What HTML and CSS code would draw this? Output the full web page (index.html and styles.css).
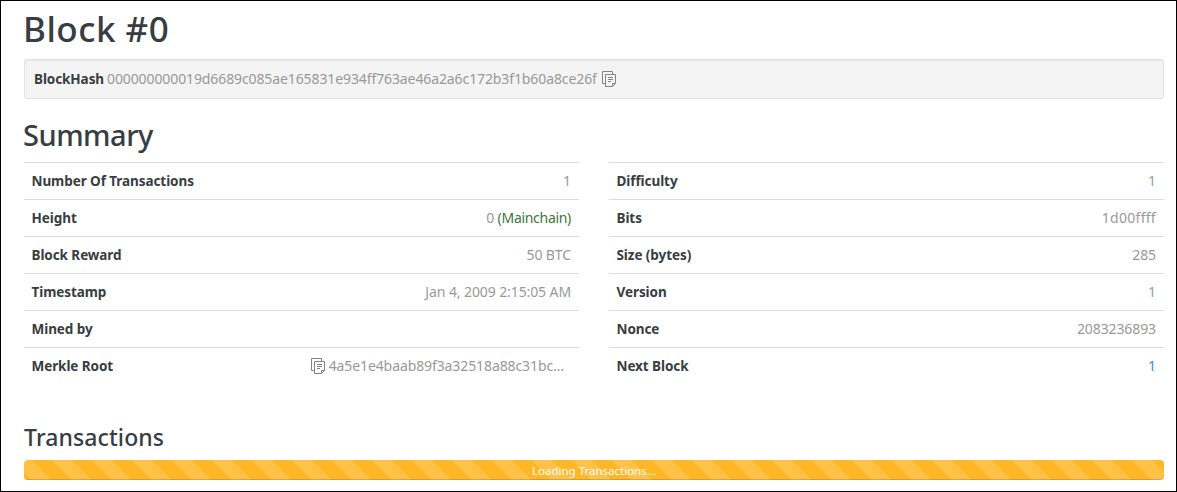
FILE: index.html
```html
<!DOCTYPE html>
<html lang="en">
<head>
<meta charset="utf-8">
<title>Block #0</title>
<link rel="stylesheet" href="styles.css">
</head>
<body>
<svg class="defs" width="0" height="0">
  <symbol id="copy" viewBox="0 0 14 16">
    <path d="M3 12.5H.5V.5h10V3" fill="none" stroke="#848484"/>
    <path d="M3.500 3.500h10v9l-3 3h-7z" fill="none" stroke="#848484"/>
    <path d="M10.500 15v-2.500h2.500M6 6.500h5M6 8.500h5M6 10.500h3" fill="none" stroke="#848484"/>
  </symbol>
</svg>
<main class="page">
  <h1 class="title"><span>Block #0</span></h1>
  <div class="well"><strong class="hash-label">BlockHash</strong><span class="hash">000000000019d6689c085ae165831e934ff763ae46a2a6c172b3f1b60a8ce26f</span><svg class="copy"><use href="#copy"/></svg></div>
  <h2 class="subtitle"><span>Summary</span></h2>
  <div class="columns">
    <dl class="table">
      <div class="row"><dt>Number Of Transactions</dt><dd>1</dd></div>
      <div class="row"><dt>Height</dt><dd>0 <span class="main">(Mainchain)</span></dd></div>
      <div class="row"><dt>Block Reward</dt><dd>50 BTC</dd></div>
      <div class="row"><dt>Timestamp</dt><dd class="date">Jan 4, 2009 2:15:05 AM</dd></div>
      <div class="row"><dt>Mined by</dt><dd></dd></div>
      <div class="row"><dt>Merkle Root</dt><dd class="merkle"><svg class="copy"><use href="#copy"/></svg><span>4a5e1e4baab89f3a32518a88c31bc…</span></dd></div>
    </dl>
    <dl class="table">
      <div class="row"><dt>Difficulty</dt><dd>1</dd></div>
      <div class="row"><dt>Bits</dt><dd class="bits">1d00ffff</dd></div>
      <div class="row"><dt>Size (bytes)</dt><dd>285</dd></div>
      <div class="row"><dt>Version</dt><dd>1</dd></div>
      <div class="row"><dt>Nonce</dt><dd>2083236893</dd></div>
      <div class="row"><dt>Next Block</dt><dd><a class="link">1</a></dd></div>
    </dl>
  </div>
  <h3 class="section"><span>Transactions</span></h3>
  <div class="progress"><span>Loading Transactions...</span></div>
</main>
</body>
</html>
```
FILE: styles.css
```css
* { box-sizing: border-box; }
body { margin: 0; background: #fff; color: #373d42; font: 14px/20px "Noto Sans", "Open Sans", sans-serif; }
.defs { display: none; }
.page { height: 492px; border: 1px solid #000; padding: 0 12px 0 23px; overflow: hidden; }
h1, h2, h3, dl, dd { margin: 0; white-space: nowrap; }
h1, h2, h3 { font-weight: 500; }
.title { font-size: 35px; line-height: 40px; padding-top: 8px; height: 58px; margin-left: -1px; letter-spacing: 0.5px; }
.well { height: 40px; display: flex; align-items: center; padding: 0 9px; border: 1px solid #e1e1e1; border-radius: 3px; background: #f4f4f4; box-shadow: inset 0 1px 1px rgba(0,0,0,.05); white-space: nowrap; }
.hash-label { font-size: 13.500px; width: 73px; letter-spacing: -0.08px; }
.hash { width: 495px; color: #999; letter-spacing: -0.105px; }
.copy { width: 14px; height: 16px; flex: none; }
.subtitle { font-size: 29px; line-height: 34px; padding-top: 19px; height: 63px; margin-left: -1px; letter-spacing: -0.5px; }
.columns { display: grid; grid-template-columns: 555px 555px; gap: 30px; }
.row { display: flex; justify-content: space-between; height: 37px; padding: 8px 8px 8px 7.500px; border-top: 1px solid #ddd; }
dt { font-size: 13.500px; font-weight: 700; letter-spacing: -0.07px; }
dd { color: #999; letter-spacing: -0.1px; }
.main { color: #3c763d; letter-spacing: -0.3px; }
.bits { letter-spacing: 0.3px; }
.link { color: #428bca; }
.merkle { display: flex; align-items: center; gap: 4px; padding-right: 7px; }
.section { font-size: 23px; line-height: 28px; padding-top: 39px; height: 76px; letter-spacing: 0.1px; }
.progress { height: 20px; border-radius: 4px; text-align: center; color: #fff; font-size: 11.500px; line-height: 21px; background-color: #ffb726; background-image: linear-gradient(45deg, rgba(255,255,255,.15) 25%, transparent 25%, transparent 50%, rgba(255,255,255,.15) 50%, rgba(255,255,255,.15) 75%, transparent 75%); background-size: 40px 40px; background-position: 28px 0; box-shadow: inset 0 -1px 0 rgba(0,0,0,.15); }
```
